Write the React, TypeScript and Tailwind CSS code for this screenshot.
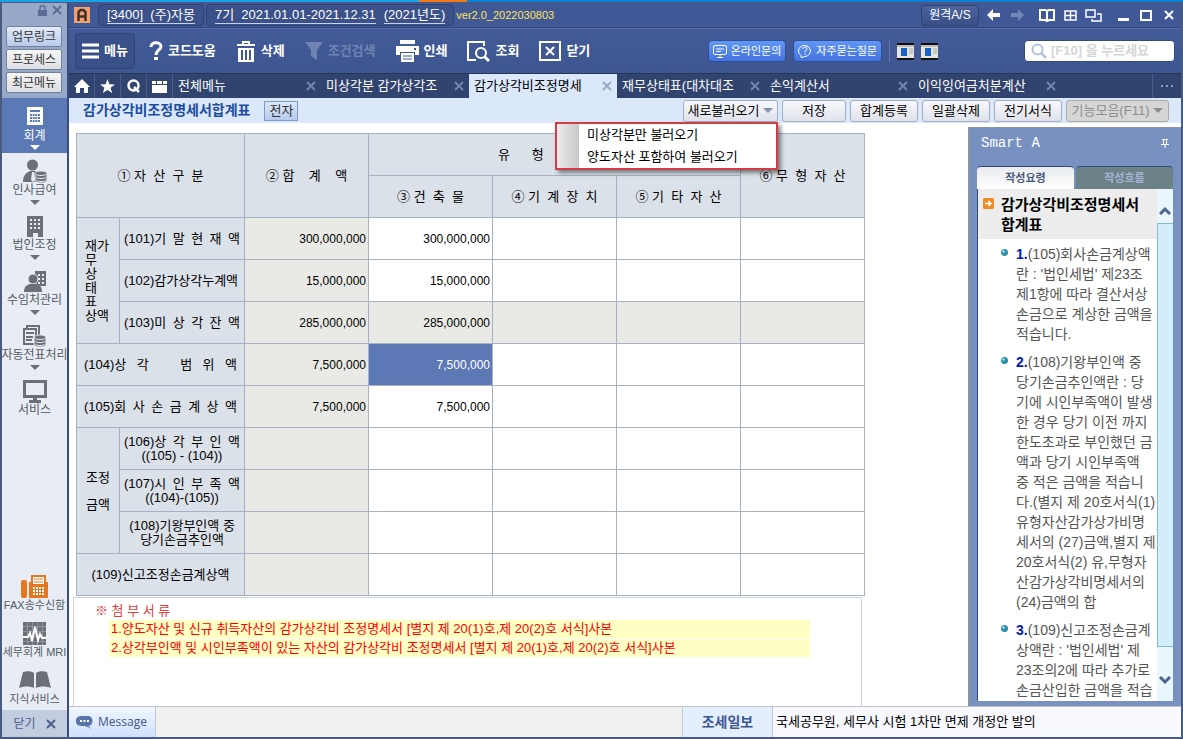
import React from "react";

type IconProps = { className?: string };

const CloseX = ({ className = "" }: IconProps) => (
  <svg viewBox="0 0 10 10" width="10" height="10" className={className} aria-hidden="true">
    <path d="M1 1l8 8M9 1l-8 8" stroke="currentColor" strokeWidth="2" fill="none" />
  </svg>
);

const Caret = ({ className = "" }: IconProps) => (
  <svg viewBox="0 0 10 5" width="10" height="5" className={className} aria-hidden="true">
    <path d="M0 0h10L5 5z" fill="currentColor" />
  </svg>
);

const CalcIcon = () => (
  <svg viewBox="0 0 16 18" width="16" height="18" aria-hidden="true">
    <path d="M0 0h16v18H0z" fill="#fff" />
    <path d="M3 3h10v2H3z" fill="#5b79b5" />
    <path d="M3 8h10M3 11h10M3 14h10" stroke="#5b79b5" strokeWidth="2" strokeDasharray="2 0.67" />
  </svg>
);

const Coins = ({ x, y }: { x: number; y: number }) => (
  <g transform={`translate(${x} ${y})`}>
    <path
      d="M0 2.5C0 1 2.5 0 6 0s6 1 6 2.5v7C12 11 9.500 12 6 12s-6-1-6-2.500z"
      fill="#6b7077"
      stroke="#e8edf5"
      strokeWidth="1"
    />
    <path d="M0.500 3c1.500 2 9.500 2 11 0M0.500 6c1.500 2 9.500 2 11 0M0.500 9c1.500 2 9.500 2 11 0" stroke="#e8edf5" fill="none" />
  </g>
);

const PayrollIcon = () => (
  <svg viewBox="0 0 24 24" width="24" height="24" aria-hidden="true">
    <circle cx="9.500" cy="6" r="5.500" fill="#6b7077" />
    <path d="M0 23c0-7 3-9 7-11h5c4 2 7 4 7 11z" fill="#6b7077" />
    <path d="M9 13l2 0 1 8-2 2-2-2z" fill="#e8edf5" />
    <Coins x={12} y={12} />
  </svg>
);

const BuildingIcon = () => (
  <svg viewBox="0 0 16 21" width="16" height="21" aria-hidden="true">
    <path d="M0 0h16v21h-5v-4H6v4H0z" fill="#6b7077" />
    <path d="M3 4h10M3 8h10M3 12h10" stroke="#e8edf5" strokeWidth="2" strokeDasharray="2 2" />
  </svg>
);

const ClientIcon = () => (
  <svg viewBox="0 0 22 21" width="22" height="21" aria-hidden="true">
    <path d="M11 0h11v15h-7l-4-3z" fill="#6b7077" />
    <path d="M14 4h6M14 8h6M14 12h6" stroke="#e8edf5" strokeWidth="2" strokeDasharray="2 2" />
    <circle cx="9" cy="8" r="5" fill="#6b7077" stroke="#e8edf5" />
    <path d="M0 21c0-5 2-7 6-8h6c4 1 6 3 6 8z" fill="#6b7077" />
  </svg>
);

const SlipIcon = () => (
  <svg viewBox="0 0 24 23" width="24" height="23" aria-hidden="true">
    <path d="M4 3V1h12v14M1 4h12v15H1z" fill="none" stroke="#6b7077" strokeWidth="2" />
    <path d="M3 8h8M3 12h7M3 15h6" stroke="#6b7077" strokeWidth="2" />
    <Coins x={11} y={10} />
  </svg>
);

const MonitorIcon = () => (
  <svg viewBox="0 0 24 23" width="24" height="23" aria-hidden="true">
    <path d="M1.500 1.500h21v15h-21z" fill="none" stroke="#6b7077" strokeWidth="3" />
    <path d="M10 17h4v3h4v3H6v-3h4z" fill="#6b7077" />
  </svg>
);

const FaxIcon = () => (
  <svg viewBox="0 0 28 23" width="28" height="23" aria-hidden="true">
    <rect x="0" y="5" width="6" height="18" rx="2" fill="#e8761f" />
    <path d="M8 7h2V0h15v7h2v16H8z" fill="#e8761f" />
    <path d="M12 2h11v7H12z" fill="#fff" />
    <path d="M13 4h9M13 7h9" stroke="#e8761f" />
    <path d="M12 13h11M12 16h11M12 19h11" stroke="#fff" strokeWidth="2" strokeDasharray="2 1" />
  </svg>
);

const MriIcon = () => (
  <svg viewBox="0 0 23 23" width="23" height="23" aria-hidden="true">
    <path d="M0 0h23v23H0z" fill="#6b7077" />
    <path d="M4.500 0v23M9.500 0v23M14.500 0v23M19.500 0v23M0 4.500h23M0 9.500h23M0 14.500h23M0 19.500h23" stroke="#8f959c" />
    <path d="M0 15h5l2-4 2 8 3-14 3 13 2-6 2 4h4" fill="none" stroke="#fff" strokeWidth="2" />
  </svg>
);

const BookIcon = () => (
  <svg viewBox="0 0 32 18" width="32" height="18" aria-hidden="true">
    <path d="M4 1c4-1.500 9-1 11 1v15c-4-2-10-2-15 0z" fill="#6b7077" />
    <path d="M28 1c-4-1.500-9-1-11 1v15c4-2 10-2 15 0z" fill="#6b7077" />
  </svg>
);

const MenuIcon = () => (
  <svg viewBox="0 0 17 16" width="17" height="16" aria-hidden="true">
    <path d="M0 2h17M0 8h17M0 14h17" stroke="#fff" strokeWidth="3" />
  </svg>
);

const HelpIcon = () => (
  <svg viewBox="0 0 14 20" width="14" height="20" aria-hidden="true">
    <path d="M2 6c0-6 10-5 10-0.500C12 9 7 9 7 14" fill="none" stroke="#fff" strokeWidth="3" />
    <path d="M5 16h4v3H5z" fill="#fff" />
  </svg>
);

const TrashIcon = () => (
  <svg viewBox="0 0 20 21" width="20" height="21" aria-hidden="true">
    <path d="M1 4h18M7 3V1h6v2" fill="none" stroke="#fff" strokeWidth="2" />
    <path d="M2 7h16v14H2z" fill="#fff" />
    <path d="M6 9v10M10 9v10M14 9v10" stroke="#405996" strokeWidth="2" />
  </svg>
);

const FunnelIcon = () => (
  <svg viewBox="0 0 18 18" width="18" height="18" aria-hidden="true">
    <path d="M0 0h18l-6 8v10l-6-4V8z" fill="#6f83b2" />
  </svg>
);

const PrinterIcon = () => (
  <svg viewBox="0 0 23 22" width="23" height="22" aria-hidden="true">
    <path d="M4 0h15v4H4zM0 6h23v9h-4v-3H4v3H0z" fill="#fff" />
    <path d="M18 8h2v2h-2z" fill="#405996" />
    <path d="M5 13h13v9H5z" fill="#fff" />
    <path d="M7 16h9M7 19h9" stroke="#405996" />
  </svg>
);

const LookupIcon = () => (
  <svg viewBox="0 0 23 21" width="23" height="21" aria-hidden="true">
    <path d="M17 5V1H1v18h8" fill="none" stroke="#fff" strokeWidth="2" />
    <circle cx="14" cy="12" r="5" fill="none" stroke="#fff" strokeWidth="2" />
    <path d="M17 15l5 5" stroke="#fff" strokeWidth="3" />
  </svg>
);

const CloseBoxIcon = () => (
  <svg viewBox="0 0 22 20" width="22" height="20" aria-hidden="true">
    <path d="M1 1h20v18H1z" fill="none" stroke="#fff" strokeWidth="2" />
    <path d="M7 6l8 8M15 6l-8 8" stroke="#fff" strokeWidth="2" />
  </svg>
);

const LayoutIcon = () => (
  <svg viewBox="0 0 17 17" width="17" height="17" aria-hidden="true">
    <path d="M0 0h17v17H0z" fill="#111" />
    <path d="M0 2h17v13H0z" fill="#e6e4de" />
    <path d="M0 2h17v2H0z" fill="#c2bfb8" />
    <path d="M4 5h6v8H4z" fill="#1561c9" />
    <path d="M12 6h4M12 8h4M12 10h4" stroke="#aaa" />
  </svg>
);

const Arrow = ({ left, className = "" }: { left?: boolean; className?: string }) => (
  <svg viewBox="0 0 13 12" width="13" height="12" className={className} aria-hidden="true">
    <path d={left ? "M6 0v4h7v4H6v4L0 6z" : "M7 0v4H0v4h7v4l6-6z"} fill="currentColor" />
  </svg>
);

const sideItems = [
  { label: "인사급여", icon: <PayrollIcon /> },
  { label: "법인조정", icon: <BuildingIcon /> },
  { label: "수임처관리", icon: <ClientIcon /> },
  { label: "자동전표처리", icon: <SlipIcon /> },
  { label: "서비스", icon: <MonitorIcon />, last: true },
];

const bottomItems = [
  { label: "FAX송수신함", icon: <FaxIcon /> },
  { label: "세무회계 MRI", icon: <MriIcon /> },
  { label: "지식서비스", icon: <BookIcon /> },
];

const Sidebar = () => (
  <aside className="w-[67px] shrink-0 flex flex-col border-r-2 border-[#3c4c7d] bg-[#e8edf5] text-[12px] text-[#555b63]">
    <div className="h-[95px] pl-1 pr-[5px] bg-[#97a9c8] flex flex-col gap-[2px]">
      <div className="h-[21px] pt-[2px] flex justify-end gap-[5px] text-[#5a6c94]">
        <svg viewBox="0 0 9 11" width="9" height="11" aria-hidden="true">
          <path d="M2 5V3c0-3 5-3 5 0v2" fill="none" stroke="currentColor" strokeWidth="1.500" />
          <path d="M0 5h9v6H0z" fill="currentColor" />
        </svg>
        <CloseX />
      </div>
      {["업무링크", "프로세스", "최근메뉴"].map((t, i) => (
        <button
          key={t}
          type="button"
          className={`h-[21px] border border-[#73819d] rounded-[2px] leading-none text-[#333] whitespace-nowrap ${
            i === 0 ? "bg-linear-to-b from-[#e3ebfa] to-[#b9cbea]" : "bg-linear-to-b from-[#f6f6f6] to-[#dcdee2]"
          }`}
        >
          {t}
        </button>
      ))}
    </div>
    <button type="button" className="h-[55px] shrink-0 bg-[#5b79b5] text-white flex flex-col items-center pt-[9px]">
      <CalcIcon />
      <span className="mt-1 leading-[14px]">회계</span>
      <Caret className="mt-[2px]" />
    </button>
    {sideItems.map((it) => (
      <button key={it.label} type="button" className="h-[55px] shrink-0 flex flex-col items-center pt-[6px] whitespace-nowrap">
        <span className="h-6 flex items-center">{it.icon}</span>
        <span className="leading-[14px]">{it.label}</span>
        {!it.last && <Caret className="mt-[3px] text-[#6b7077]" />}
      </button>
    ))}
    <div className="mt-auto">
      {bottomItems.map((it) => (
        <button key={it.label} type="button" className="w-full h-[47px] flex flex-col items-center pt-[5px] whitespace-nowrap text-[11px]">
          <span className="h-6 flex items-center">{it.icon}</span>
          <span className="leading-[14px]">{it.label}</span>
        </button>
      ))}
    </div>
    <button type="button" className="h-[27px] bg-[#c3cde0] text-[#4b5e8c] flex items-center justify-center gap-[10px]">
      닫기 <CloseX />
    </button>
  </aside>
);

const TitleBar = () => (
  <div className="h-[25px] shrink-0 pl-[5px] pr-[7px] flex items-center bg-[#405996] border-b border-[#33477c] text-white text-[13px] whitespace-nowrap">
    <svg viewBox="0 0 16 16" width="16" height="16" aria-hidden="true">
      <path d="M0 0h16v16H0z" fill="#f3a070" />
      <path d="M4.500 14V5l2-2h3l2 2v9M4.500 9.500h7" fill="none" stroke="#40302c" strokeWidth="2.500" />
    </svg>
    <div className="ml-2 h-[22px] px-2 flex items-center rounded border border-[#2f4274] bg-[#3b5189]">
      <span className="border-b border-[#c5d0ea] leading-[16px] whitespace-pre">[3400]  (주)자몽</span>
    </div>
    <div className="ml-[2px] h-[22px] px-2 flex items-center gap-2 rounded border border-[#2f4274] bg-[#3b5189]">
      <span className="border-b border-[#c5d0ea] leading-[16px] whitespace-pre">7기  2021.01.01-2021.12.31</span>
      <span className="border-b border-[#c5d0ea] leading-[16px]">(2021년도)</span>
    </div>
    <span className="ml-[2px] text-[11px] text-[#ffe45c]">ver2.0_2022030803</span>
    <button type="button" className="ml-auto w-[58px] h-[21px] rounded border border-[#2f4274] bg-linear-to-b from-[#4c639c] to-[#3a4f87] text-[12px] leading-none">
      원격A/S
    </button>
    <Arrow left className="ml-2" />
    <Arrow className="ml-[11px] text-[#7488b8]" />
    <svg viewBox="0 0 16 13" width="16" height="13" className="ml-[15px]" aria-hidden="true">
      <path d="M1 1h5l2 1 2-1h5v10h-5l-2 1-2-1H1zM8 2v11" fill="none" stroke="#fff" strokeWidth="2" />
    </svg>
    <svg viewBox="0 0 13 11" width="13" height="11" className="ml-[9px]" aria-hidden="true">
      <path d="M1 1h11v9H1zM6.500 1v9M1 5.500h11" fill="none" stroke="#fff" strokeWidth="1.500" />
    </svg>
    <svg viewBox="0 0 17 13" width="17" height="13" className="ml-2" aria-hidden="true">
      <path d="M1 1h9v7H1zM12 5h4v7H7v-2" fill="none" stroke="#fff" strokeWidth="1.500" />
    </svg>
    <svg viewBox="0 0 11 11" width="11" height="11" className="ml-4" aria-hidden="true">
      <path d="M0 9.500h11" stroke="#fff" strokeWidth="3" />
    </svg>
    <svg viewBox="0 0 12 11" width="12" height="11" className="ml-[11px]" aria-hidden="true">
      <path d="M1 1h10v9H1z" fill="none" stroke="#fff" strokeWidth="2" />
    </svg>
    <CloseX className="ml-3" />
  </div>
);

const tools = [
  { label: "코드도움", icon: <HelpIcon /> },
  { label: "삭제", icon: <TrashIcon /> },
  { label: "조건검색", icon: <FunnelIcon />, off: true },
  { label: "인쇄", icon: <PrinterIcon /> },
  { label: "조회", icon: <LookupIcon /> },
  { label: "닫기", icon: <CloseBoxIcon /> },
];

const Toolbar = () => (
  <div className="h-[45px] shrink-0 pl-[6px] pr-[6px] flex items-center bg-linear-to-b from-[#435c99] to-[#3d568f] border-t border-[#5269a3] text-white text-[13px] font-bold whitespace-nowrap">
    <button type="button" className="h-9 px-[6px] flex items-center gap-[5px] rounded border border-[#2f4274] bg-[#3a5089]">
      <MenuIcon /> 메뉴
    </button>
    <div className="ml-[14px] flex items-center gap-5">
      {tools.map((t) => (
        <button key={t.label} type="button" disabled={t.off} className={`flex items-center gap-[5px] ${t.off ? "text-[#6f83b2]" : ""}`}>
          {t.icon} {t.label}
        </button>
      ))}
    </div>
    <div className="ml-auto flex items-center gap-[7px] text-[11px] font-normal">
      <a href="#inquiry" className="h-[22px] px-1 flex items-center gap-1 rounded border border-[#2d4f9c] bg-linear-to-b from-[#6397f5] to-[#4273dd]">
        <svg viewBox="0 0 14 13" width="14" height="13" aria-hidden="true">
          <rect x="0.500" y="0.500" width="13" height="9" rx="1.500" fill="none" stroke="#fff" />
          <path d="M3 4h8M3 6.500h5M4 12.500h6M7 9v3" stroke="#fff" />
        </svg>
        온라인문의
      </a>
      <a href="#faq" className="h-[22px] px-1 flex items-center gap-1 rounded border border-[#2d4f9c] bg-linear-to-b from-[#6397f5] to-[#4273dd]">
        <svg viewBox="0 0 14 14" width="14" height="14" aria-hidden="true">
          <path d="M3 11.500A6 5.500 0 1 1 7 12.500L3 13.500z" fill="none" stroke="#fff" />
          <path d="M5 5c0-2.500 4-2.500 4 0 0 1.500-2 1.500-2 3M7 9v1.500" fill="none" stroke="#fff" />
        </svg>
        자주묻는질문
      </a>
      <span className="w-px h-[21px] bg-[#6379ad]" />
      <LayoutIcon />
      <LayoutIcon />
    </div>
    <label className="ml-[86px] w-[151px] h-[22px] pl-[6px] flex items-center gap-1 rounded bg-white border border-[#35497c]">
      <svg viewBox="0 0 16 16" width="16" height="16" className="shrink-0" aria-hidden="true">
        <circle cx="6.500" cy="6.500" r="5" fill="none" stroke="#b5c1da" strokeWidth="2" />
        <path d="M10 10l5 5" stroke="#b5c1da" strokeWidth="2.500" />
      </svg>
      <input
        type="text"
        aria-label="[F10] 을 누르세요"
        placeholder="[F10] 을 누르세요"
        className="w-full min-w-0 text-[13px] font-bold text-gray-800 placeholder:text-[#d5d5d5] focus:outline-none"
      />
    </label>
  </div>
);

const tabs = ["전체메뉴", "미상각분 감가상각조", "감가상각비조정명세", "재무상태표(대차대조", "손익계산서", "이익잉여금처분계산"];

const TabBar = () => (
  <nav className="h-[25px] shrink-0 flex bg-[#30446f] border-t border-[#263859] text-white text-[13px] whitespace-nowrap">
    <button type="button" aria-label="홈" className="w-[26px] flex items-center justify-center border-r border-[#465c8c]">
      <svg viewBox="0 0 16 14" width="16" height="14" aria-hidden="true">
        <path d="M8 0l8 8h-2v6h-4V9H6v5H2V8H0z" fill="#fff" />
      </svg>
    </button>
    <button type="button" aria-label="즐겨찾기" className="w-[26px] flex items-center justify-center border-r border-[#465c8c]">
      <svg viewBox="0 0 16 15" width="15" height="14" aria-hidden="true">
        <path d="M8 0l2 5.500 6 .3-4.700 3.700L13 15l-5-3.300L3 15l1.700-5.500L0 5.800l6-.3z" fill="#fff" />
      </svg>
    </button>
    <button type="button" aria-label="검색" className="w-[26px] flex items-center justify-center border-r border-[#465c8c]">
      <svg viewBox="0 0 13 14" width="13" height="14" aria-hidden="true">
        <circle cx="6.500" cy="6.500" r="5" fill="none" stroke="#fff" strokeWidth="2.500" />
        <path d="M7 8l5 5" stroke="#fff" strokeWidth="2.500" />
      </svg>
    </button>
    <button type="button" aria-label="달력" className="w-[26px] flex items-center justify-center border-r border-[#465c8c]">
      <svg viewBox="0 0 15 13" width="15" height="13" aria-hidden="true">
        <path d="M0 1h4v3H0zM5 1h5v3H5zM11 1h4v3h-4zM0 5h15v8H0z" fill="#fff" />
      </svg>
    </button>
    {tabs.map((t, i) => (
      <div
        key={t}
        className={`w-[148px] px-[5px] flex items-center justify-between ${i === 2 ? "bg-[#dbe8fa] text-black" : ""}`}
      >
        <a href="#tab">{t}</a>
        <CloseX className={i === 2 ? "text-[#9aa9c5]" : "text-[#7285ae]"} />
      </div>
    ))}
    <button type="button" aria-label="더보기" className="ml-auto w-[29px] flex items-center justify-center gap-[3px] border-l border-[#465c8c]">
      <span className="w-[2px] h-[2px] bg-[#8c9bc0]" />
      <span className="w-[2px] h-[2px] bg-[#8c9bc0]" />
      <span className="w-[2px] h-[2px] bg-[#8c9bc0]" />
    </button>
  </nav>
);

const actionClass =
  "h-[22px] rounded-[3px] border border-[#a3aec6] bg-linear-to-b from-[#f8f9fb] to-[#dfe2ea] leading-none flex items-center justify-center gap-1";

const ActionBar = () => (
  <div className="h-[25px] shrink-0 pl-[14px] pr-3 flex items-center bg-[#dbe8fa] text-[13px] text-black whitespace-nowrap">
    <h1 className="text-[14px] font-bold text-[#1c4da1]">감가상각비조정명세서합계표</h1>
    <button type="button" className="ml-[14px] w-[34px] h-5 border border-[#7f9bc9] bg-linear-to-b from-[#dce8fa] to-[#b5cbec] text-[#333] leading-none">
      전자
    </button>
    <div className="ml-auto flex gap-1">
      <div className="relative">
        <button type="button" aria-haspopup="menu" aria-expanded="true" className={`w-[95px] ${actionClass}`}>
          새로불러오기 <Caret className="text-[#8391b0]" />
        </button>
        <ul
          role="menu"
          className="absolute z-10 top-full right-0 w-[223px] bg-white border-2 border-[#d23c44] shadow-[3px_3px_4px_rgba(0,0,0,0.45)]"
        >
          {["미상각분만 불러오기", "양도자산 포함하여 불러오기"].map((t) => (
            <li key={t} role="menuitem" className="h-[22px] flex items-center gap-2">
              <span className="w-[22px] h-full bg-linear-to-r from-[#ececec] to-[#c8c8c8]" />
              {t}
            </li>
          ))}
        </ul>
      </div>
      <button type="button" className={`w-[64px] ${actionClass}`}>저장</button>
      <button type="button" className={`w-[68px] ${actionClass}`}>합계등록</button>
      <button type="button" className={`w-[68px] ${actionClass}`}>일괄삭제</button>
      <button type="button" className={`w-[68px] ${actionClass}`}>전기서식</button>
      <button
        type="button"
        disabled
        className="w-[103px] h-[22px] rounded-[3px] border border-[#aaa] bg-[#d6d6d6] text-[#8d8d8d] leading-none flex items-center justify-center gap-1"
      >
        기능모음(F11) <Caret />
      </button>
    </div>
  </div>
);

const head = "border border-[#a8b0c6] bg-[#dbe1e8] font-normal p-0";

const Spread = ({ children }: { children: string }) => (
  <span className="block px-1 [text-align-last:justify] whitespace-nowrap">{children}</span>
);

const Cells = ({ total = "", building = "", shaded = false, active = false }) => (
  <>
    <td className="border border-[#a8b0c6] bg-[#e9eae5] pr-[2px] text-right text-[12px]">{total}</td>
    <td
      className={`border border-[#a8b0c6] pr-[2px] text-right text-[12px] ${
        active ? "bg-[#5c79b5] text-white" : shaded ? "bg-[#e9eae5]" : "bg-white"
      }`}
    >
      {building}
    </td>
    {[0, 1, 2].map((n) => (
      <td key={n} className={`border border-[#a8b0c6] ${shaded ? "bg-[#e9eae5]" : "bg-white"}`} />
    ))}
  </>
);

const AssetTable = () => (
  <table className="ml-[7px] mt-[10px] w-[789px] table-fixed border-collapse text-[13px] leading-[14px] text-black">
    <colgroup>
      <col className="w-[43px]" />
      <col className="w-[125px]" />
      <col className="w-[124px]" />
      <col className="w-[124px]" />
      <col className="w-[124px]" />
      <col className="w-[124px]" />
      <col className="w-[124px]" />
    </colgroup>
    <thead className="whitespace-pre">
      <tr className="h-[42px]">
        <th rowSpan={2} colSpan={2} className={head}>① 자  산  구  분</th>
        <th rowSpan={2} className={head}>② 합    계    액</th>
        <th colSpan={3} className={head}>유      형      자      산</th>
        <th rowSpan={2} className={head}>⑥ 무  형  자  산</th>
      </tr>
      <tr className="h-[42px]">
        <th className={head}>③ 건  축  물</th>
        <th className={head}>④ 기  계  장  치</th>
        <th className={head}>⑤ 기  타  자  산</th>
      </tr>
    </thead>
    <tbody>
      <tr className="h-[42px]">
        <th rowSpan={3} className={`${head} pl-2 text-left`}>
          재가<br />무<br />상<br />태<br />표<br />상액
        </th>
        <th className={head}><Spread>(101)기 말 현 재 액</Spread></th>
        <Cells total="300,000,000" building="300,000,000" />
      </tr>
      <tr className="h-[42px]">
        <th className={head}><Spread>(102)감가상각누계액</Spread></th>
        <Cells total="15,000,000" building="15,000,000" />
      </tr>
      <tr className="h-[42px]">
        <th className={head}><Spread>(103)미 상 각 잔 액</Spread></th>
        <Cells total="285,000,000" building="285,000,000" shaded />
      </tr>
      <tr className="h-[42px]">
        <th colSpan={2} className={`${head} px-[3px]`}><Spread>(104)상 각 &nbsp; 범 위 액</Spread></th>
        <Cells total="7,500,000" building="7,500,000" active />
      </tr>
      <tr className="h-[42px]">
        <th colSpan={2} className={`${head} px-[3px]`}><Spread>(105)회 사 손 금 계 상 액</Spread></th>
        <Cells total="7,500,000" building="7,500,000" />
      </tr>
      <tr className="h-[42px]">
        <th rowSpan={3} className={`${head} leading-[27px]`}>조정<br />금액</th>
        <th className={head}>
          <Spread>(106)상 각 부 인 액</Spread>
          ((105) - (104))
        </th>
        <Cells />
      </tr>
      <tr className="h-[42px]">
        <th className={head}>
          <Spread>(107)시 인 부 족 액</Spread>
          ((104)-(105))
        </th>
        <Cells />
      </tr>
      <tr className="h-[42px]">
        <th className={head}>(108)기왕부인액 중<br />당기손금추인액</th>
        <Cells />
      </tr>
      <tr className="h-[42px]">
        <th colSpan={2} className={head}>(109)신고조정손금계상액</th>
        <Cells />
      </tr>
    </tbody>
  </table>
);

const Notes = () => (
  <section className="ml-1 mt-px w-[789px] flex-1 border border-b-0 border-[#c9d6de] pt-1 pl-[35px] text-[13px] text-[#ff0000] whitespace-nowrap">
    <p className="-ml-[14px] leading-[18px] text-[#e03c3c] whitespace-pre">※ 첨 부 서 류</p>
    <p className="w-[701px] pl-[2px] leading-[18px] bg-[#ffffc4]">
      1.양도자산 및 신규 취득자산의 감가상각비 조정명세서 [별지 제 20(1)호,제 20(2)호 서식]사본
    </p>
    <p className="mt-px w-[701px] pl-[2px] leading-[18px] bg-[#ffffc4]">
      2.상각부인액 및 시인부족액이 있는 자산의 감가상각비 조정명세서 [별지 제 20(1)호,제 20(2)호 서식]사본
    </p>
  </section>
);

const guides = [
  ["(105)회사손금계상액", "란 : '법인세법' 제23조", "제1항에 따라 결산서상", "손금으로 계상한 금액을", "적습니다."],
  [
    "(108)기왕부인액 중",
    "당기손금추인액란 : 당",
    "기에 시인부족액이 발생",
    "한 경우 당기 이전 까지",
    "한도초과로 부인했던 금",
    "액과 당기 시인부족액",
    "중 적은 금액을 적습니",
    "다.(별지 제 20호서식(1)",
    "유형자산감가상가비명",
    "세서의 (27)금액,별지 제",
    "20호서식(2) 유,무형자",
    "산감가상각비명세서의",
    "(24)금액의 합",
  ],
  ["(109)신고조정손금계", "상액란 : '법인세법' 제", "23조의2에 따라 추가로", "손금산입한 금액을 적습"],
];

const SmartPanel = () => (
  <aside className="mt-1 w-[213px] shrink-0 flex flex-col bg-[#7891c1] border-l-2 border-t border-[#8a93a4] pl-[7px] pr-2 pb-[5px]">
    <div className="h-[30px] shrink-0 pl-1 pr-1 flex items-center justify-between text-white">
      <h2 className="font-['Liberation_Mono','Noto_Sans_CJK_KR',monospace] text-[14px]">Smart A</h2>
      <svg viewBox="0 0 8 9" width="8" height="9" aria-hidden="true">
        <path d="M2.500 0v5M5.500 0v5M1 0.500h6M0 5.500h8M4 6v3" stroke="#fff" fill="none" />
      </svg>
    </div>
    <div className="mt-2 h-[23px] shrink-0 flex gap-[2px] text-[11px] font-bold">
      <button type="button" className="flex-1 rounded-t bg-linear-to-b from-[#e9ebee] to-white text-[#4a5a7d] border-t border-[#2f4a7c]">
        작성요령
      </button>
      <button type="button" className="flex-1 rounded-t bg-[#6b8286] text-[#a7b4d8] border-t border-[#2f4a7c]">
        작성흐름
      </button>
    </div>
    <div className="flex-1 min-h-0 flex bg-white border-l border-[#2f4a7c]">
      <div className="flex-1 min-w-0 overflow-hidden text-[14px] leading-5 text-[#555]">
        <div className="h-[50px] pt-[6px] pl-[5px] flex gap-[7px] bg-[#ededed] text-[15px] font-bold text-black whitespace-nowrap">
          <svg viewBox="0 0 11 11" width="11" height="11" className="mt-[3px] shrink-0" aria-hidden="true">
            <rect width="11" height="11" rx="1.500" fill="#f08c28" />
            <path d="M2 5.500h6M5.500 3l2.500 2.500L5.500 8" stroke="#fff" strokeWidth="1.500" fill="none" />
          </svg>
          <h3>감가상각비조정명세서<br />합계표</h3>
        </div>
        <ol className="pt-[5px] flex flex-col gap-2 whitespace-nowrap">
          {guides.map((lines, i) => (
            <li key={i} className="pl-[23px] flex gap-2">
              <svg viewBox="0 0 7 7" width="7" height="7" className="mt-[5px] shrink-0" aria-hidden="true">
                <circle cx="3.500" cy="3.500" r="3.500" fill="#2b8fa8" />
                <circle cx="2.500" cy="2.500" r="1.200" fill="#b5e4ee" />
              </svg>
              <p>
                {lines.map((line, n) => (
                  <span key={line} className="block">
                    {n === 0 && <b className="text-[#0018b8]">{i + 1}.</b>}
                    {line}
                  </span>
                ))}
              </p>
            </li>
          ))}
        </ol>
      </div>
      <div className="w-4 flex flex-col bg-[#e9f6fc] text-[#4b6490]">
        <div className="h-[34px] flex items-center justify-center pt-2">
          <svg viewBox="0 0 12 9" width="12" height="9" aria-hidden="true">
            <path d="M1 8l5-5 5 5" stroke="currentColor" strokeWidth="3" fill="none" />
          </svg>
        </div>
        <div className="flex-1 border border-r-0 border-[#7fbbdc] bg-[#d3edfd]" />
        <div className="h-[54px] flex items-center justify-center pt-3">
          <svg viewBox="0 0 12 9" width="12" height="9" aria-hidden="true">
            <path d="M1 1l5 5 5-5" stroke="currentColor" strokeWidth="3" fill="none" />
          </svg>
        </div>
      </div>
    </div>
  </aside>
);

const StatusBar = () => (
  <footer className="h-[31px] shrink-0 flex border-t border-[#bfc1c8] bg-[#f0f0ee] text-[13px] whitespace-nowrap">
    <button type="button" className="w-[87px] pl-[7px] flex items-center gap-[5px] border-r border-[#c3c8d4] bg-linear-to-b from-[#f0f6ff] to-[#cfe1fb] text-[#3f5687]">
      <svg viewBox="0 0 17 13" width="17" height="13" aria-hidden="true">
        <path d="M5 0h7c6 0 6 10 0 10l4 3-7-3H5C-2 10-2 0 5 0z" fill="#5b75a8" />
        <path d="M4 5h9" stroke="#fff" strokeWidth="2" strokeDasharray="2 1.500" />
      </svg>
      <span className="font-['Open_Sans','Noto_Sans_CJK_KR',sans-serif] text-[12px]">Message</span>
    </button>
    <div className="flex-1" />
    <strong className="w-[91px] flex items-center justify-center border-x border-[#bccbe6] bg-[#e3eefe] text-[14px] text-[#3c588f]">조세일보</strong>
    <p className="w-[408px] pl-[3px] flex items-center bg-[#f8f9fe] text-black">
      국세공무원, 세무사 시험 1차만 면제 개정안 발의
    </p>
  </footer>
);

const App: React.FC = () => (
  <div className="h-screen flex flex-col bg-[#4a5a7c] font-['Liberation_Sans','Noto_Sans_CJK_KR',sans-serif]">
    <div className="h-[3px] shrink-0 flex border-b border-[#4a5a7c] bg-[#16a3ea]">
      <span className="w-[419px]" />
      <span className="w-12 bg-[#f07a18]" />
      <span className="flex-1 bg-[#0a7fd6]" />
    </div>
    <div className="flex-1 min-h-0 flex px-[2px] pb-[2px]">
      <Sidebar />
      <div className="flex-1 min-w-0 flex flex-col">
        <TitleBar />
        <Toolbar />
        <TabBar />
        <ActionBar />
        <div className="flex-1 min-h-0 flex bg-white">
          <main className="flex-1 min-w-0 flex flex-col">
            <AssetTable />
            <Notes />
          </main>
          <SmartPanel />
        </div>
        <StatusBar />
      </div>
    </div>
  </div>
);

export default App;
